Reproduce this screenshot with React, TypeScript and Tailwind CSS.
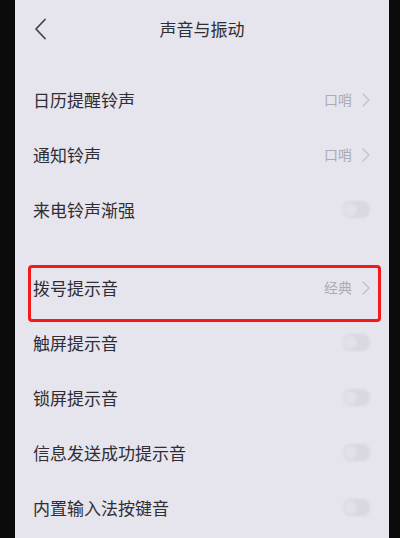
import React from "react";

const FONT = { fontFamily: '"Noto Sans CJK SC", "Noto Sans", sans-serif' };

type Row = { label: string; value?: string; toggle?: boolean; marked?: boolean };

const GROUP_A: Row[] = [
  { label: "日历提醒铃声", value: "口哨" },
  { label: "通知铃声", value: "口哨" },
  { label: "来电铃声渐强", toggle: true },
];

const GROUP_B: Row[] = [
  { label: "拨号提示音", value: "经典", marked: true },
  { label: "触屏提示音", toggle: true },
  { label: "锁屏提示音", toggle: true },
  { label: "信息发送成功提示音", toggle: true },
  { label: "内置输入法按键音", toggle: true },
];

function Chevron() {
  return (
    <svg width="8" height="14" viewBox="0 0 8 14" fill="none" className="ml-[10px]">
      <path d="M1 1l6 6-6 6" stroke="#c2c0c8" strokeWidth="1.4" strokeLinecap="round" strokeLinejoin="round" />
    </svg>
  );
}

// switches in the shot are off and washed out, barely visible
function Toggle() {
  return (
    <div className="flex h-[17px] w-[27px] items-center rounded-[8px] bg-[#d9d7e1] px-[1px] blur-[1px]">
      <div className="h-[13px] w-[13px] rounded-full bg-[#e2e0e8]" />
    </div>
  );
}

function SettingRow({ row }: { row: Row }) {
  return (
    <div className="relative flex h-[55px] items-center justify-between pl-[18px] pr-[19px]">
      <span className="text-[17px] text-[#2f2e34]">{row.label}</span>
      {row.toggle ? (
        <Toggle />
      ) : (
        <div className="flex items-center">
          <span className="text-[14px] text-[#acaab2]">{row.value}</span>
          <Chevron />
        </div>
      )}
      {row.marked && (
        <div className="pointer-events-none absolute left-[13px] right-[8px] top-[5px] bottom-[-7px] rounded-[4px] border-[3px] border-[#f5191c]" />
      )}
    </div>
  );
}

export default function App() {
  return (
    <div className="flex h-[538px] w-[400px] overflow-hidden bg-[#0b0b0b]" style={FONT}>
      <div className="w-[15px] shrink-0" />
      <div className="flex w-[374px] shrink-0 flex-col bg-[#e6e4ec]">
        {/* Header */}
        <div className="relative flex h-[58px] items-center justify-center">
          <svg
            width="13"
            height="22"
            viewBox="0 0 13 22"
            fill="none"
            className="absolute left-[19px] top-[18px]"
          >
            <path d="M11 1.5L2 11l9 9.5" stroke="#45444a" strokeWidth="1.8" strokeLinecap="round" strokeLinejoin="round" />
          </svg>
          <span className="text-[17px] text-[#2f2e34]">声音与振动</span>
        </div>

        <div className="h-[14px]" />
        {GROUP_A.map((r) => (
          <SettingRow key={r.label} row={r} />
        ))}
        <div className="h-[23px]" />
        {GROUP_B.map((r) => (
          <SettingRow key={r.label} row={r} />
        ))}
      </div>
      <div className="flex-1" />
    </div>
  );
}
